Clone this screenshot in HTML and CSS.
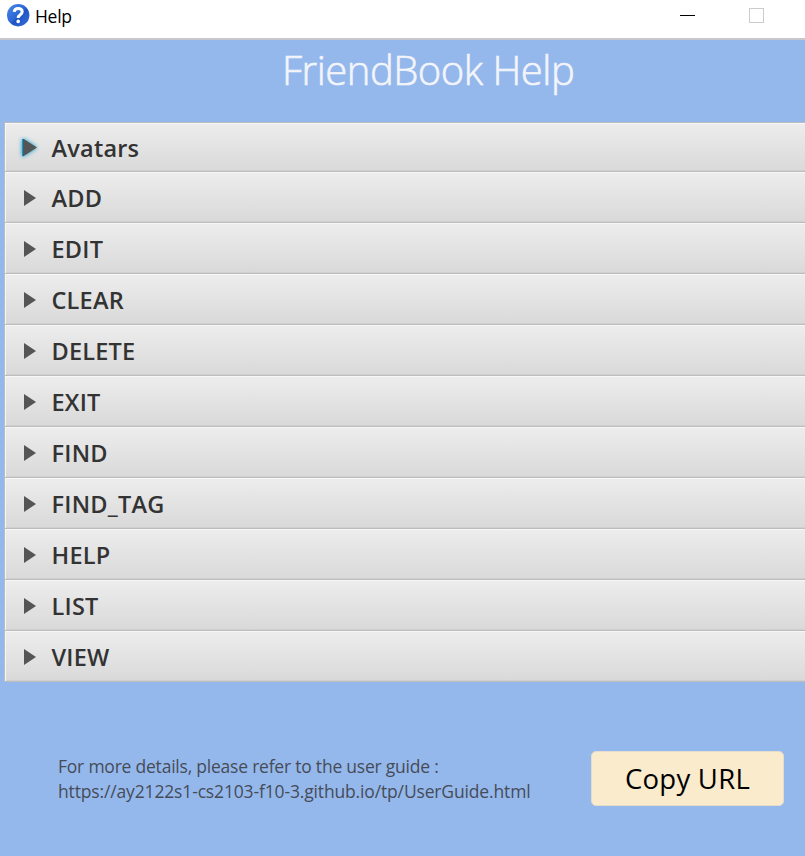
FILE: index.html
```html
<!DOCTYPE html>
<html lang="en">
<head>
<meta charset="utf-8">
<title>Help</title>
<link rel="stylesheet" href="styles.css">
</head>
<body>
<header class="titlebar">
  <svg class="app-icon" width="24" height="24" viewBox="0 0 24 24"><defs><linearGradient id="orb" x1="0" y1="0" x2="1" y2="1"><stop offset="0" stop-color="#4a8bea"/><stop offset=".5" stop-color="#2b65d4"/><stop offset=".55" stop-color="#1f52c4"/><stop offset="1" stop-color="#3774dc"/></linearGradient></defs><circle cx="12.200" cy="11.200" r="11.200" fill="url(#orb)"/><path d="M8.200 7.800C8.600 3.200 16.200 3.400 16.200 7.800C16.200 11 12.200 10.600 12.200 14" fill="none" stroke="#fff" stroke-width="3"/><circle cx="12.200" cy="17.400" r="1.800" fill="#fff"/></svg>
  <span class="window-title">Help</span>
  <svg class="controls" width="90" height="20" viewBox="0 0 90 20"><path d="M0 8.500H15" stroke="#000"/><rect x="69.500" y="1.500" width="14" height="14" fill="none" stroke="#ccc"/></svg>
</header>
<main>
  <h1>FriendBook Help</h1>
  <div class="accordion">
    <div class="pane focused"><i></i><span>Avatars</span></div>
    <div class="pane"><i></i><span>ADD</span></div>
    <div class="pane"><i></i><span>EDIT</span></div>
    <div class="pane"><i></i><span>CLEAR</span></div>
    <div class="pane"><i></i><span>DELETE</span></div>
    <div class="pane"><i></i><span>EXIT</span></div>
    <div class="pane"><i></i><span>FIND</span></div>
    <div class="pane"><i></i><span>FIND_TAG</span></div>
    <div class="pane"><i></i><span>HELP</span></div>
    <div class="pane"><i></i><span>LIST</span></div>
    <div class="pane"><i></i><span>VIEW</span></div>
  </div>
  <footer>
    <p>For more details, please refer to the user guide :<br><span class="url">https://ay2122s1-cs2103-f10-3.github.io/tp/UserGuide.html</span></p>
    <button>Copy URL</button>
  </footer>
</main>
</body>
</html>
```

FILE: styles.css
```css
* { box-sizing: border-box; }
body { margin: 0; height: 856px; overflow: hidden; background: #95b8ec; font-family: "Open Sans", "Noto Sans", sans-serif; }
.titlebar { height: 40px; background: #fff; border-bottom: 2px solid #c6c8cb; display: flex; padding: 4px 0 0 6px; }
.window-title { font-size: 17.5px; line-height: 25px; margin-left: 5px; letter-spacing: -0.3px; color: #000; }
.controls { margin: 3px 35px 0 auto; }
h1 { margin: 0; height: 82px; padding: 2px 0 0 282px; font-size: 40px; line-height: 56px; font-weight: 300; letter-spacing: -0.48px; color: #f3f5fa; -webkit-text-stroke: 0.6px #f3f5fa; white-space: nowrap; }
.accordion { margin-left: 4px; border: solid #b9bcc0; border-width: 1px 0 0 1px; }
.pane { height: 51px; display: flex; align-items: center; padding: 2px 0 0 18px; border-bottom: 1px solid #bdbdbd; box-shadow: inset 1px 1px #f7f7f7, inset 0 -1px #d0d0d0; background: linear-gradient(#ededed, #d9d9d9); font-size: 23.5px; font-weight: 600; letter-spacing: 0.22px; color: #333; }
.pane:first-child { height: 49px; padding-top: 1px; }
.pane i { width: 12px; height: 16px; margin: 0 16px 0 1px; background: #555; clip-path: polygon(0 0, 100% 50%, 0 100%); }
.pane span { margin-left: -0.5px; }
.focused i { width: 14px; height: 18px; margin: 0 15px 0 0; background: none; clip-path: none; filter: drop-shadow(-1px 0 0.5px #039ed3) drop-shadow(0 0 2px #039ed3); }
.focused i::before { content: ""; display: block; width: 14px; height: 18px; background: #555; clip-path: polygon(0 0, 100% 50%, 0 100%); }
footer { display: flex; padding: 69px 21px 0 58px; justify-content: space-between; }
p { margin: 3px 0 0; font-size: 17.5px; line-height: 25px; letter-spacing: -0.22px; color: #454c58; white-space: nowrap; }
.url { letter-spacing: -0.15px; }
button { width: 193px; height: 55px; padding: 0; border: 1px solid #e5dccb; border-radius: 5px; background: #faebcd; font: 27.5px "Open Sans", sans-serif; color: #000; letter-spacing: 0.25px; }
```
